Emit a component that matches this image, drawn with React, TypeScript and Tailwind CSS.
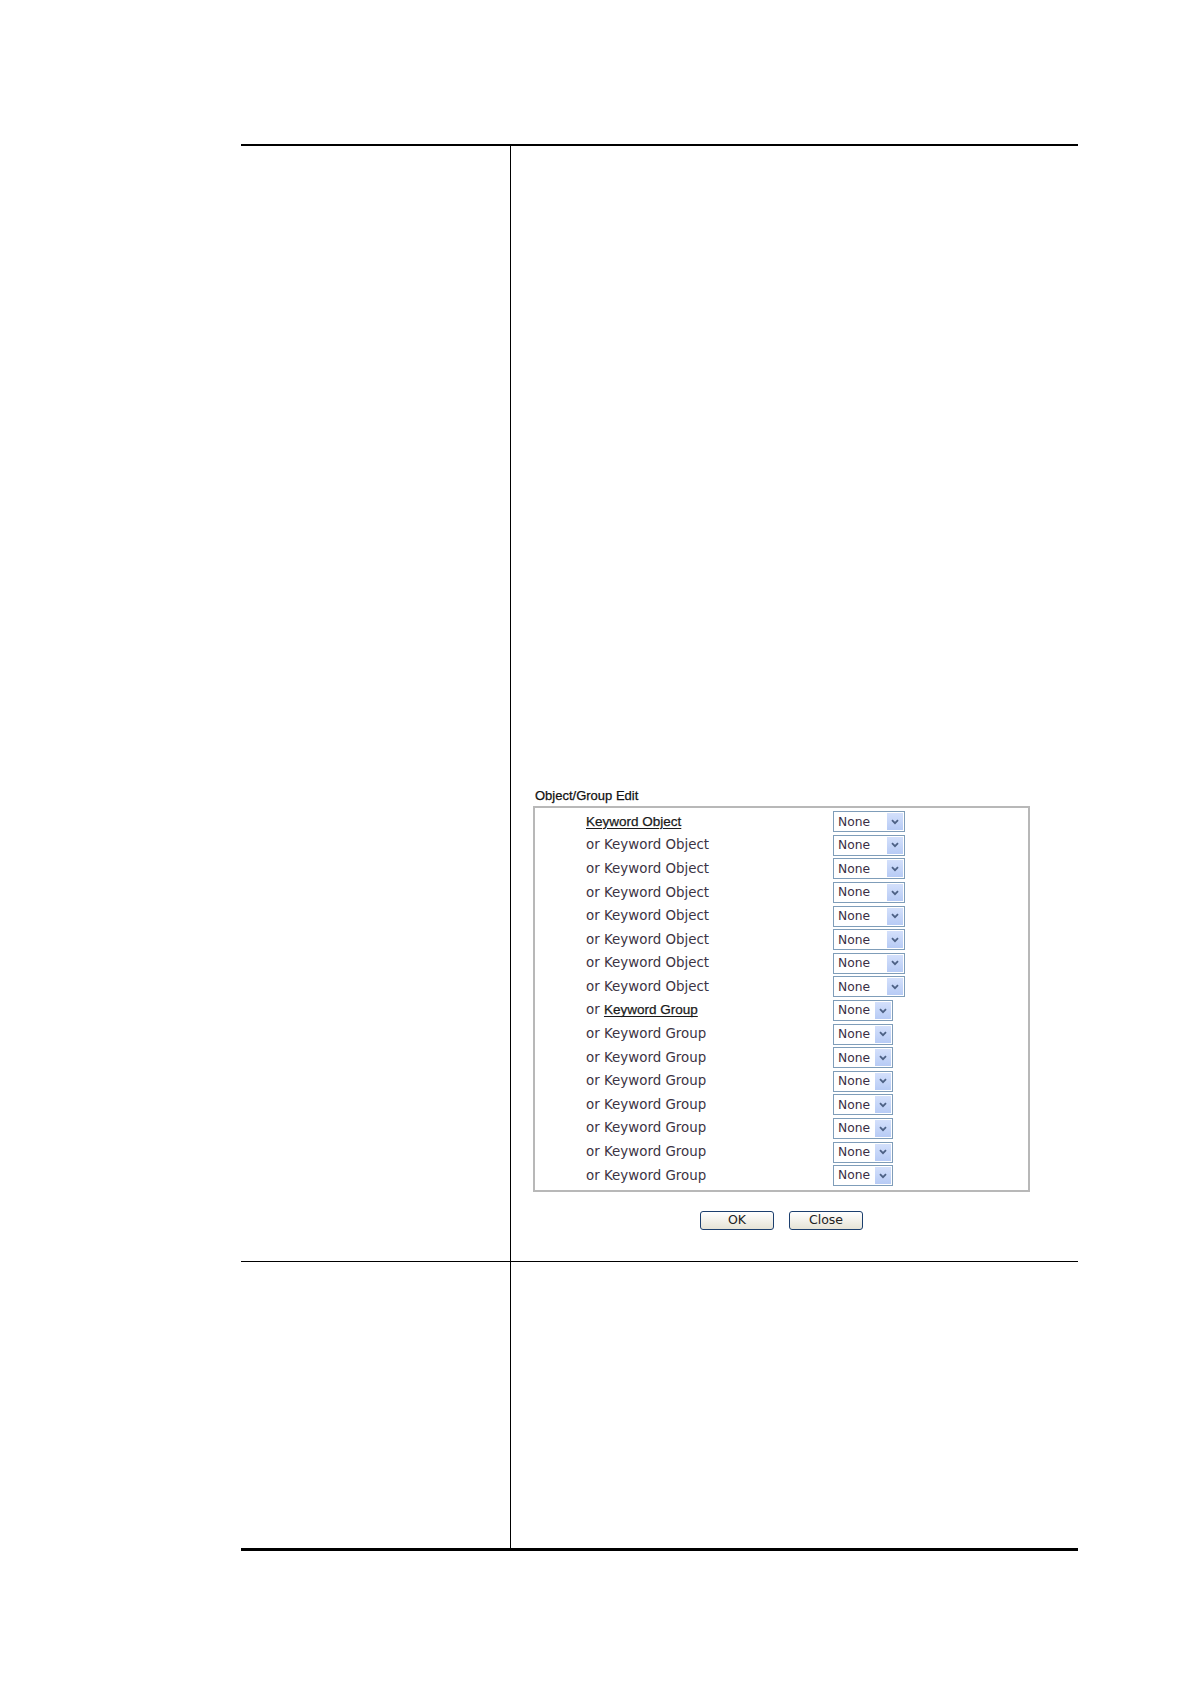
import React from 'react';

const rows = [
  { head: true, prefix: '', label: 'Keyword Object', kind: 'object' },
  ...Array.from({ length: 7 }, () => ({ head: false, prefix: 'or ', label: 'Keyword Object', kind: 'object' })),
  { head: true, prefix: 'or ', label: 'Keyword Group', kind: 'group' },
  ...Array.from({ length: 7 }, () => ({ head: false, prefix: 'or ', label: 'Keyword Group', kind: 'group' })),
];

const Chevron: React.FC = () => (
  <svg width="8" height="6" viewBox="0 0 8 6" className="block">
    <path d="M1 1.2 L4 4.2 L7 1.2" fill="none" stroke="#4d6185" strokeWidth="1.8" />
  </svg>
);

const FakeSelect: React.FC<{ wide: boolean }> = ({ wide }) => (
  <div
    className={`flex h-[21px] items-stretch border border-[#7f9db9] bg-white p-px ${wide ? 'w-[72px]' : 'w-[60px]'}`}
  >
    <span className="flex flex-1 items-center pl-[3px] font-['DejaVu_Sans',Verdana,sans-serif] text-[12.3px] text-[#3a2f45]">
      None
    </span>
    <span className="flex w-[16px] items-center justify-center bg-gradient-to-b from-[#d4e0fb] to-[#b7cbf5]">
      <Chevron />
    </span>
  </div>
);

const XpButton: React.FC<{ label: string }> = ({ label }) => (
  <button className="flex h-[19px] w-[74px] items-center justify-center rounded-[3px] border border-[#1c3f6e] bg-gradient-to-b from-white to-[#e6e3d6] font-['DejaVu_Sans',Verdana,sans-serif] text-[12.5px] leading-none text-[#222]">
    {label}
  </button>
);

const App: React.FC = () => {
  return (
    <div className="min-h-[1684px] w-full bg-white pt-[144px]">
      <div className="ml-[241px] w-[837px] border-t-2 border-b-[3px] border-black">
        <div className="flex h-[1116px] border-b border-black">
          <div className="w-[270px] border-r border-black" />
          <div className="flex-1 pt-[642px]">
            <div className="pl-[24px] font-['Liberation_Sans',Arial,sans-serif] text-[13px] leading-[15px] text-[#111] [-webkit-text-stroke:0.25px_#111]">
              Object/Group Edit
            </div>
            <div className="ml-[22px] mt-[3px] w-[497px] border-2 border-[#b8b8b8] py-[2px]">
              {rows.map((r, i) => (
                <div key={i} className="flex h-[23.6px] items-center">
                  <div className="w-[298px] pl-[51px] font-['DejaVu_Sans',Verdana,sans-serif] text-[13.4px] text-[#3c3444]">
                    {r.prefix}
                    {r.head ? (
                      <span className="font-['Liberation_Sans',Arial,sans-serif] text-[13.5px] text-[#1a1a1a] underline underline-offset-2 [-webkit-text-stroke:0.25px_#1a1a1a]">
                        {r.label}
                      </span>
                    ) : (
                      r.label
                    )}
                  </div>
                  <FakeSelect wide={r.kind === 'object'} />
                </div>
              ))}
            </div>
            <div className="ml-[22px] mt-[19px] flex w-[497px] justify-center gap-[15px]">
              <XpButton label="OK" />
              <XpButton label="Close" />
            </div>
          </div>
        </div>
        <div className="flex h-[286px]">
          <div className="w-[270px] border-r border-black" />
          <div className="flex-1" />
        </div>
      </div>
    </div>
  );
};

export default App;
